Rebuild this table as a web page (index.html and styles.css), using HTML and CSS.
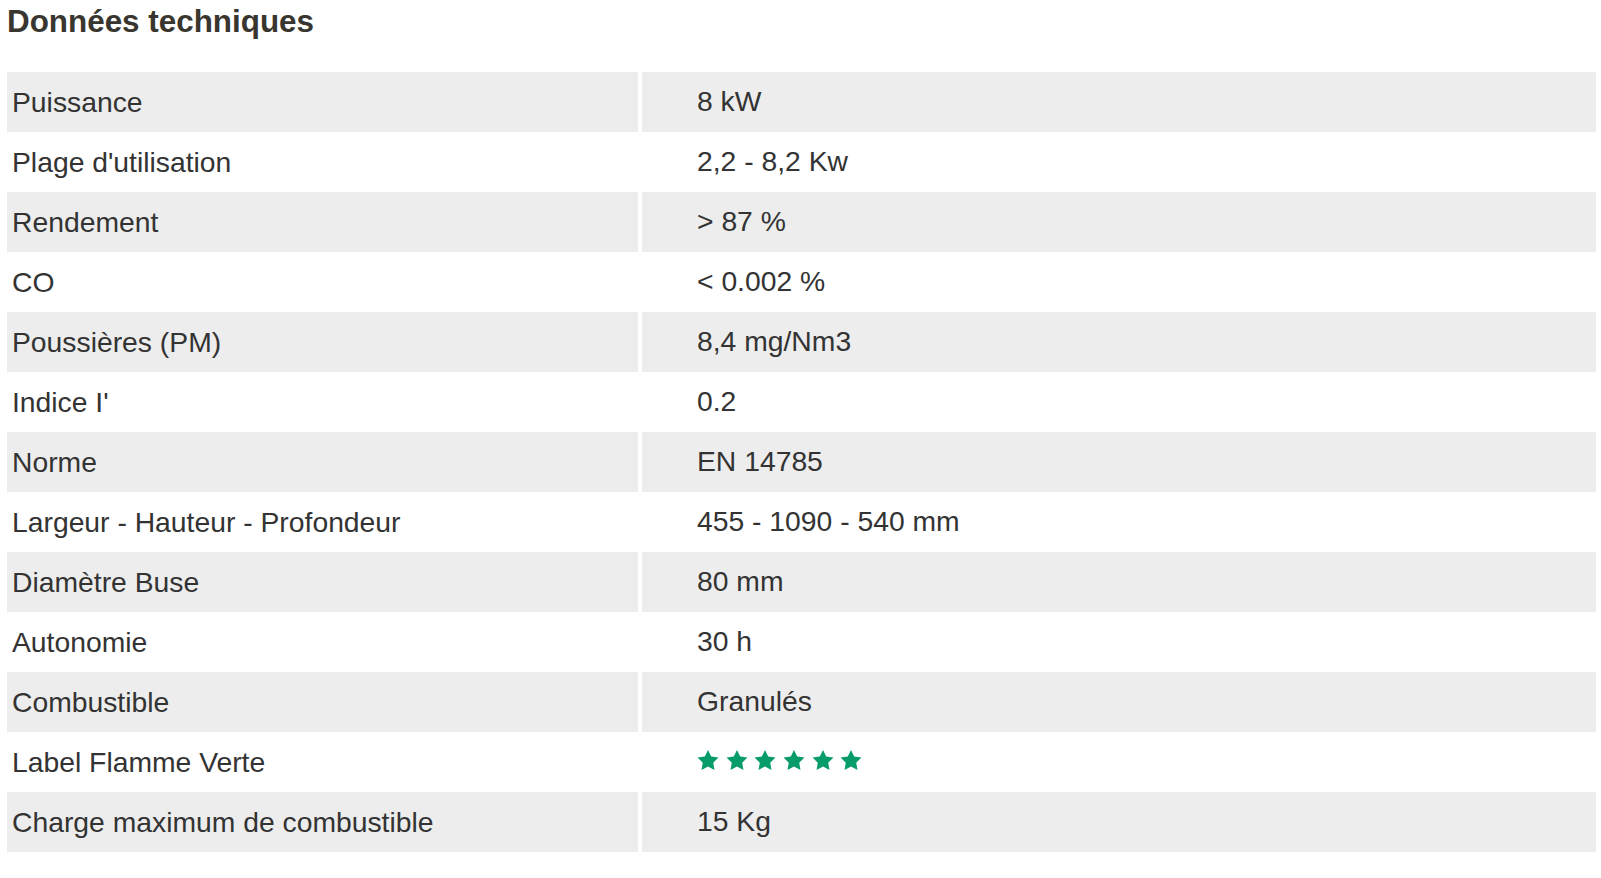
FILE: index.html
```html
<!DOCTYPE html>
<html lang="fr">
<head>
<meta charset="utf-8">
<title>Données techniques</title>
<link rel="stylesheet" href="styles.css">
</head>
<body>
<section class="specs">
  <h2 class="specs-title">Données techniques</h2>
  <div class="specs-table">
    <div class="row odd"><div class="cell label">Puissance</div><div class="cell value">8 kW</div></div>
    <div class="row"><div class="cell label">Plage d'utilisation</div><div class="cell value">2,2 - 8,2 Kw</div></div>
    <div class="row odd"><div class="cell label">Rendement</div><div class="cell value">&gt; 87 %</div></div>
    <div class="row"><div class="cell label">CO</div><div class="cell value">&lt; 0.002 %</div></div>
    <div class="row odd"><div class="cell label">Poussières (PM)</div><div class="cell value">8,4 mg/Nm3</div></div>
    <div class="row"><div class="cell label">Indice I'</div><div class="cell value">0.2</div></div>
    <div class="row odd"><div class="cell label">Norme</div><div class="cell value">EN 14785</div></div>
    <div class="row"><div class="cell label">Largeur - Hauteur - Profondeur</div><div class="cell value">455 - 1090 - 540 mm</div></div>
    <div class="row odd"><div class="cell label">Diamètre Buse</div><div class="cell value">80 mm</div></div>
    <div class="row"><div class="cell label">Autonomie</div><div class="cell value">30 h</div></div>
    <div class="row odd"><div class="cell label">Combustible</div><div class="cell value">Granulés</div></div>
    <div class="row"><div class="cell label">Label Flamme Verte</div><div class="cell value">
      <div class="stars" aria-label="6 étoiles">
        <svg class="star" viewBox="0 0 24 24"><polygon points="12,1 15.23,7.55 22.46,8.6 17.23,13.7 18.47,20.9 12,17.5 5.53,20.9 6.77,13.7 1.54,8.6 8.77,7.55"/></svg>
        <svg class="star" viewBox="0 0 24 24"><polygon points="12,1 15.23,7.55 22.46,8.6 17.23,13.7 18.47,20.9 12,17.5 5.53,20.9 6.77,13.7 1.54,8.6 8.77,7.55"/></svg>
        <svg class="star" viewBox="0 0 24 24"><polygon points="12,1 15.23,7.55 22.46,8.6 17.23,13.7 18.47,20.9 12,17.5 5.53,20.9 6.77,13.7 1.54,8.6 8.77,7.55"/></svg>
        <svg class="star" viewBox="0 0 24 24"><polygon points="12,1 15.23,7.55 22.46,8.6 17.23,13.7 18.47,20.9 12,17.5 5.53,20.9 6.77,13.7 1.54,8.6 8.77,7.55"/></svg>
        <svg class="star" viewBox="0 0 24 24"><polygon points="12,1 15.23,7.55 22.46,8.6 17.23,13.7 18.47,20.9 12,17.5 5.53,20.9 6.77,13.7 1.54,8.6 8.77,7.55"/></svg>
        <svg class="star" viewBox="0 0 24 24"><polygon points="12,1 15.23,7.55 22.46,8.6 17.23,13.7 18.47,20.9 12,17.5 5.53,20.9 6.77,13.7 1.54,8.6 8.77,7.55"/></svg>
      </div>
    </div></div>
    <div class="row odd"><div class="cell label">Charge maximum de combustible</div><div class="cell value">15 Kg</div></div>
  </div>
</section>
</body>
</html>
```

FILE: styles.css
```css
html, body {
  margin: 0;
  padding: 0;
  background: #ffffff;
}

body {
  font-family: "Liberation Sans", Arial, sans-serif;
  color: #333333;
}

.specs {
  padding: 4px 5px 0 7px;
}

.specs-title {
  margin: 0 0 32px 0;
  font-size: 31.4px;
  font-weight: bold;
  line-height: 36px;
  color: #38362f;
}

.specs-table {
  display: flex;
  flex-direction: column;
}

.row {
  display: grid;
  grid-template-columns: 631px 1fr;
  column-gap: 4px;
  height: 60px;
}

.cell {
  display: flex;
  align-items: center;
  font-size: 28.3px;
}

.row.odd .cell {
  background: #ededed;
}

.label {
  padding-left: 5px;
  padding-top: 1px;
}

.value {
  padding-left: 55px;
  padding-bottom: 1px;
}

.stars {
  display: flex;
  gap: 4.7px;
  margin-left: -1px;
  padding-bottom: 1px;
}

.star {
  width: 24px;
  height: 24px;
  fill: #079c69;
}
```
